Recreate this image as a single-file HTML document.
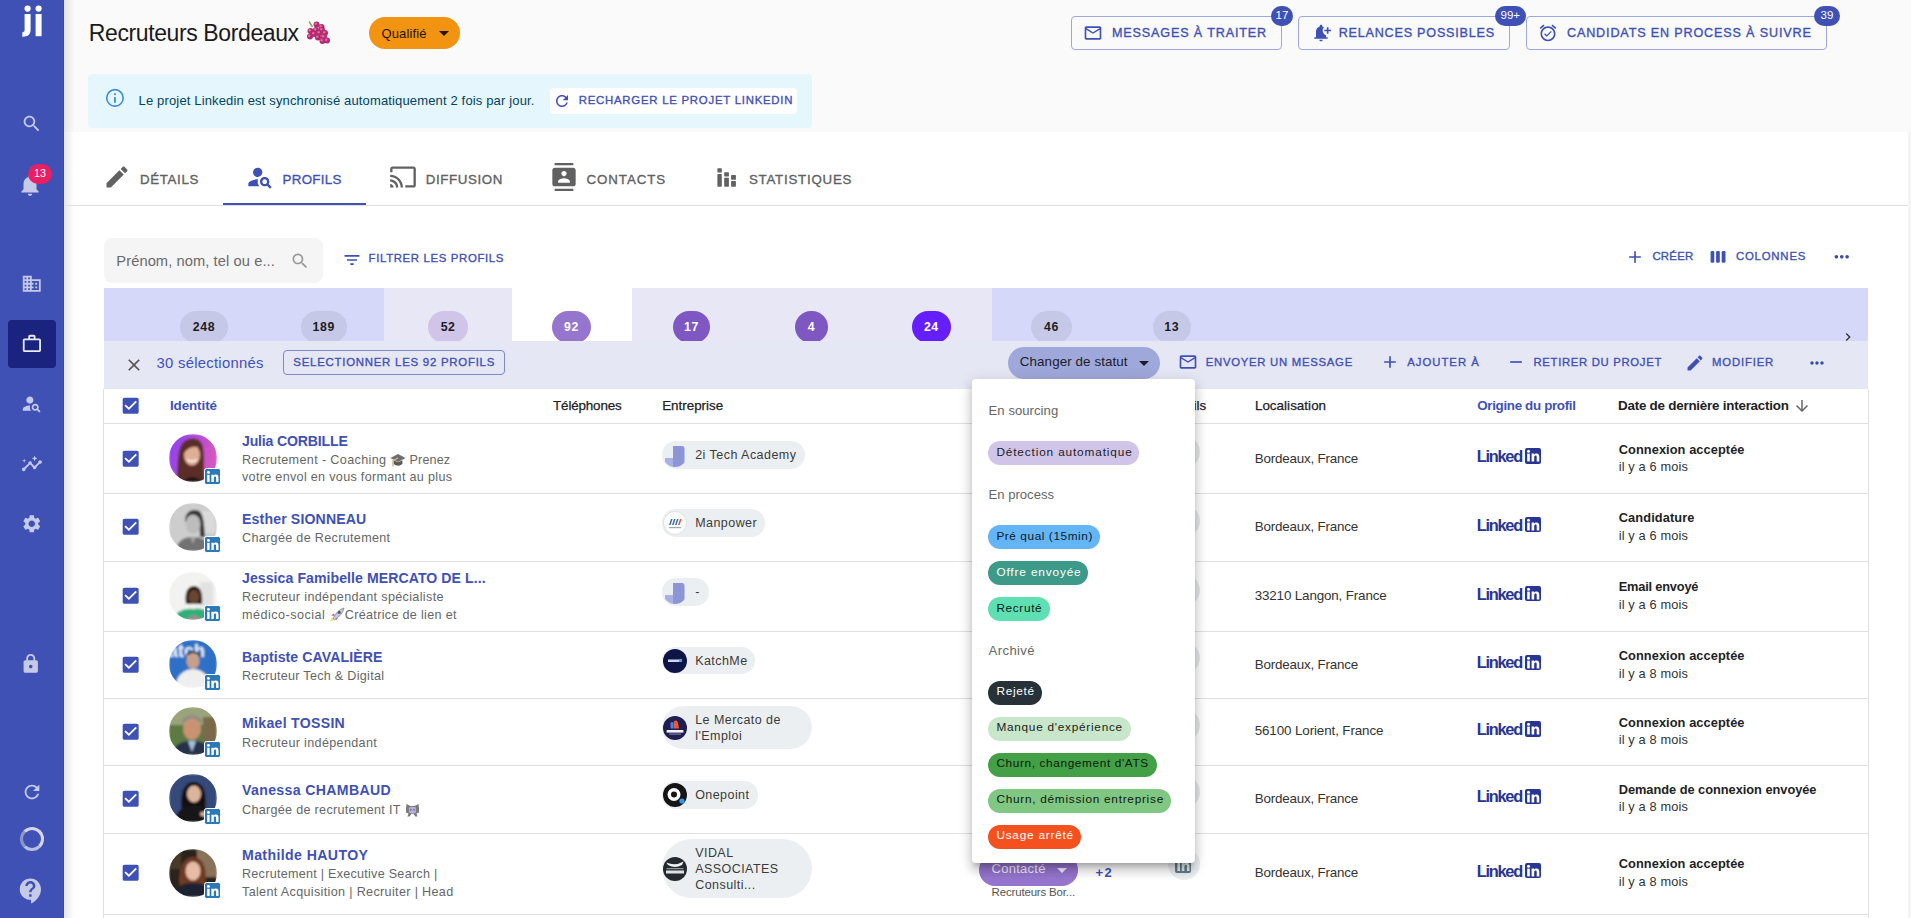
<!DOCTYPE html>
<html><head><meta charset="utf-8"><title>Recruteurs Bordeaux</title>
<style>
html,body{margin:0;padding:0;width:1911px;height:918px;overflow:hidden;position:relative;font-family:"Liberation Sans",sans-serif;}
.r{position:absolute;}
.t{position:absolute;white-space:nowrap;line-height:1;}
</style></head><body>
<div class="r" style="left:0px;top:0px;width:1911px;height:918px;background:#f5f5f5;"></div>
<div class="r" style="left:64px;top:0px;width:1847px;height:131.5px;background:#fafafa;"></div>
<div class="r" style="left:64px;top:131.5px;width:1844px;height:786.5px;background:#ffffff;"></div>
<div class="r" style="left:0px;top:0px;width:64px;height:918px;background:#3f51b5;"></div>
<div class="r" style="left:63px;top:0px;width:1px;height:918px;background:#3a48a0;"></div>
<div class="r" style="left:64px;top:0;width:10px;height:918px;background:linear-gradient(90deg,rgba(0,0,0,0.10),rgba(0,0,0,0))"></div>
<svg class="r" style="left:18px;top:4px" width="28" height="34" viewBox="0 0 28 34"><circle cx="9.6" cy="4.6" r="3.1" fill="#fff"/><circle cx="20.6" cy="4.6" r="3.1" fill="#fff"/><path fill="#fff" d="M6.6 10h6v15.5c0 5-2.6 7.2-7.8 7.2h-0.6l.3-4.8h.4c1.3 0 1.7-.6 1.7-2.2z"/><rect x="17.6" y="10" width="6" height="22.2" fill="#fff"/></svg>
<svg class="r" style="left:20.7px;top:113.3px;" width="21.4" height="21.4" viewBox="0 0 24 24"><path fill="#c5cae9" d="M15.5 14h-.79l-.28-.27C15.41 12.59 16 11.11 16 9.5 16 5.91 13.09 3 9.5 3S3 5.91 3 9.5 5.91 16 9.5 16c1.61 0 3.09-.59 4.23-1.57l.27.28v.79l5 4.99L20.49 19l-4.99-5zm-6 0C7.01 14 5 11.99 5 9.5S7.01 5 9.5 5 14 7.01 14 9.5 11.99 14 9.5 14z"/></svg>
<svg class="r" style="left:17px;top:171.5px;" width="26" height="26" viewBox="0 0 24 24"><path fill="#c5cae9" d="M12 22c1.1 0 2-.9 2-2h-4c0 1.1.89 2 2 2zm6-6v-5c0-3.07-1.64-5.64-4.5-6.32V4c0-.83-.67-1.5-1.5-1.5s-1.5.67-1.5 1.5v.68C7.63 5.36 6 7.92 6 11v5l-2 2v1h16v-1l-2-2z"/></svg>
<div class="r" style="left:28px;top:164px;width:24px;height:20px;border-radius:10px;background:#e91e63"></div>
<span id="b13" class="t" style="left:0.00px;top:168.06px;font-size:10.8px;color:#fff;font-weight:400;letter-spacing:0.000px;left:28px;width:24px;text-align:center;">13</span>
<svg class="r" style="left:20.9px;top:273.1px;" width="21.5" height="21.5" viewBox="0 0 24 24"><path fill="#c5cae9" d="M12 7V3H2v18h20V7H12zM6 19H4v-2h2v2zm0-4H4v-2h2v2zm0-4H4V9h2v2zm0-4H4V5h2v2zm4 12H8v-2h2v2zm0-4H8v-2h2v2zm0-4H8V9h2v2zm0-4H8V5h2v2zm10 12h-8v-2h2v-2h-2v-2h2v-2h-2V9h8v10zm-2-8h-2v2h2v-2zm0 4h-2v2h2v-2z"/></svg>
<div class="r" style="left:8px;top:320px;width:48px;height:47.5px;background:#1a237e;border-radius:4px;"></div>
<svg class="r" style="left:20.9px;top:333px;" width="21.8" height="21.8" viewBox="0 0 24 24"><path fill="#e8eaf6" d="M14 6V4h-4v2h4zM4 8v11h16V8H4zm16-2c1.11 0 2 .89 2 2v11c0 1.11-.89 2-2 2H4c-1.11 0-2-.89-2-2l.01-11c0-1.11.88-2 1.99-2h4V4c0-1.11.89-2 2-2h4c1.11 0 2 .89 2 2v2h4z"/></svg>
<svg class="r" style="left:20.9px;top:392.6px;" width="21.3" height="21.3" viewBox="0 0 24 24"><path fill="#c5cae9" d="M10 12c2.21 0 4-1.79 4-4s-1.79-4-4-4-4 1.79-4 4 1.79 4 4 4zm.35 2.01C7.62 13.91 2 15.27 2 18v2h9.54c-2.47-2.76-1.23-5.89-1.19-5.99zm9.08 4.01c.36-.59.57-1.28.57-2.02 0-2.21-1.79-4-4-4s-4 1.79-4 4 1.79 4 4 4c.74 0 1.43-.22 2.02-.57L20.59 22 22 20.59l-2.57-2.58zM16 18c-1.1 0-2-.9-2-2s.9-2 2-2 2 .9 2 2-.9 2-2 2z"/></svg>
<svg class="r" style="left:20.9px;top:453.1px;" width="21.8" height="21.8" viewBox="0 0 24 24"><path fill="#c5cae9" d="M21 8c-1.45 0-2.26 1.44-1.93 2.51l-3.55 3.56c-.3-.09-.74-.09-1.04 0l-2.55-2.55C12.27 10.45 11.46 9 10 9c-1.45 0-2.27 1.44-1.93 2.52l-4.56 4.55C2.44 15.74 1 16.55 1 18c0 1.1.9 2 2 2 1.45 0 2.26-1.44 1.93-2.51l4.55-4.56c.3.09.74.09 1.04 0l2.55 2.55C12.73 16.55 13.54 18 15 18c1.45 0 2.27-1.44 1.93-2.52l3.56-3.55c1.07.33 2.51-.48 2.51-1.93 0-1.1-.9-2-2-2zM15 9l.94-2.07L18 6l-2.06-.93L15 3l-.92 2.07L12 6l2.08.93zM3.5 11 4 9l2-.5L4 8l-.5-2L3 8l-2 .5L3 9z"/></svg>
<svg class="r" style="left:21.1px;top:513.2px;" width="21.5" height="21.5" viewBox="0 0 24 24"><path fill="#c5cae9" d="M19.14 12.94c.04-.3.06-.61.06-.94 0-.32-.02-.64-.07-.94l2.03-1.58c.18-.14.23-.41.12-.61l-1.92-3.32c-.12-.22-.37-.29-.59-.22l-2.39.96c-.5-.38-1.03-.7-1.62-.94l-.36-2.54c-.04-.24-.24-.41-.48-.41h-3.84c-.24 0-.43.17-.47.41l-.36 2.54c-.59.24-1.13.57-1.62.94l-2.39-.96c-.22-.08-.47 0-.59.22L2.74 8.87c-.12.21-.08.47.12.61l2.03 1.58c-.05.3-.09.63-.09.94s.02.64.07.94l-2.03 1.58c-.18.14-.23.41-.12.61l1.92 3.32c.12.22.37.29.59.22l2.39-.96c.5.38 1.03.7 1.62.94l.36 2.54c.05.24.24.41.48.41h3.84c.24 0 .44-.17.47-.41l.36-2.54c.59-.24 1.13-.56 1.62-.94l2.39.96c.22.08.47 0 .59-.22l1.92-3.32c.12-.22.07-.47-.12-.61l-2.01-1.58zM12 15.6c-1.98 0-3.6-1.62-3.6-3.6s1.62-3.6 3.6-3.6 3.6 1.62 3.6 3.6-1.62 3.6-3.6 3.6z"/></svg>
<svg class="r" style="left:20px;top:652.7px;" width="21.5" height="21.5" viewBox="0 0 24 24"><path fill="#c5cae9" d="M18 8h-1V6c0-2.76-2.24-5-5-5S7 3.24 7 6v2H6c-1.1 0-2 .9-2 2v10c0 1.1.9 2 2 2h12c1.1 0 2-.9 2-2V10c0-1.1-.9-2-2-2zm-6 9c-1.1 0-2-.9-2-2s.9-2 2-2 2 .9 2 2-.9 2-2 2zM9 8V6c0-1.66 1.34-3 3-3s3 1.34 3 3v2H9z"/></svg>
<svg class="r" style="left:20.8px;top:780.7px;" width="22" height="22" viewBox="0 0 24 24"><path fill="#c5cae9" d="M17.65 6.35C16.2 4.9 14.21 4 12 4c-4.42 0-7.99 3.58-7.99 8s3.57 8 7.99 8c3.73 0 6.84-2.55 7.73-6h-2.08c-.82 2.33-3.04 4-5.65 4-3.31 0-6-2.69-6-6s2.69-6 6-6c1.66 0 3.14.69 4.22 1.78L13 11h7V4l-2.35 2.35z"/></svg>
<div class="r" style="left:20px;top:826.5px;width:24px;height:24px;border-radius:50%;box-sizing:border-box;border:3.2px solid #d4d8ef;border-left-color:#8d96c8;border-bottom-color:#b9bfe0"></div>
<svg class="r" style="left:16px;top:876px;" width="30" height="30" viewBox="0 0 24 24"><path fill="#c5cae9" d="M11.5 2C6.81 2 3 5.81 3 10.5S6.81 19 11.5 19h.5v3c4.86-2.34 8-7 8-11.5C20 5.81 16.19 2 11.5 2zm1 14.5h-2v-2h2v2zm0-3.5h-2c0-3.25 3-3 3-5 0-1.1-.9-2-2-2s-2 .9-2 2h-2c0-2.21 1.79-4 4-4s4 1.79 4 4c0 2.5-3 2.75-3 5z"/></svg>
<span id="title" class="t" style="left:88.80px;top:22.13px;font-size:23px;color:#1a1a1a;font-weight:400;letter-spacing:-0.391px;">Recruteurs Bordeaux</span>
<svg class="r" style="left:306px;top:20px" width="26" height="26" viewBox="0 0 26 26"><path d="M3 1.5 L6.5 7" stroke="#79a85a" stroke-width="1.4" fill="none"/><circle cx="10.5" cy="4.5" r="3" fill="#b32a6e"/><circle cx="9.7" cy="3.7" r="1.2" fill="#e46aa6"/><circle cx="15.5" cy="7.0" r="3" fill="#b32a6e"/><circle cx="14.7" cy="6.2" r="1.2" fill="#e46aa6"/><circle cx="4.5" cy="11.0" r="3" fill="#b32a6e"/><circle cx="3.7" cy="10.2" r="1.2" fill="#e46aa6"/><circle cx="10.0" cy="10.0" r="3" fill="#b32a6e"/><circle cx="9.2" cy="9.2" r="1.2" fill="#e46aa6"/><circle cx="16.0" cy="10.0" r="3" fill="#b32a6e"/><circle cx="15.2" cy="9.2" r="1.2" fill="#e46aa6"/><circle cx="8.0" cy="14.0" r="3" fill="#b32a6e"/><circle cx="7.2" cy="13.2" r="1.2" fill="#e46aa6"/><circle cx="13.5" cy="13.0" r="3" fill="#b32a6e"/><circle cx="12.7" cy="12.2" r="1.2" fill="#e46aa6"/><circle cx="19.0" cy="13.0" r="3" fill="#b32a6e"/><circle cx="18.2" cy="12.2" r="1.2" fill="#e46aa6"/><circle cx="4.0" cy="16.5" r="3" fill="#b32a6e"/><circle cx="3.2" cy="15.7" r="1.2" fill="#e46aa6"/><circle cx="12.0" cy="17.5" r="3" fill="#b32a6e"/><circle cx="11.2" cy="16.7" r="1.2" fill="#e46aa6"/><circle cx="18.0" cy="17.0" r="3" fill="#b32a6e"/><circle cx="17.2" cy="16.2" r="1.2" fill="#e46aa6"/><circle cx="16.5" cy="21.0" r="3" fill="#b32a6e"/><circle cx="15.7" cy="20.2" r="1.2" fill="#e46aa6"/><circle cx="21.0" cy="20.5" r="3" fill="#b32a6e"/><circle cx="20.2" cy="19.7" r="1.2" fill="#e46aa6"/></svg>
<div class="r" style="left:369px;top:17px;width:91px;height:32px;background:#f39312;border-radius:16px;"></div>
<span id="qual" class="t" style="left:381.50px;top:26.70px;font-size:13px;color:#231300;font-weight:400;letter-spacing:0.130px;">Qualifié</span>
<svg class="r" style="left:432px;top:21px;" width="24" height="24" viewBox="0 0 24 24"><path fill="#231300" d="M7 10l5 5 5-5z"/></svg>
<div class="r" style="left:1071px;top:16px;width:211px;height:34px;background:transparent;border:1px solid #9fa8da;border-radius:4px;box-sizing:border-box;"></div>
<svg class="r" style="left:1083px;top:23px;" width="20" height="20" viewBox="0 0 24 24"><path fill="#3f51b5" d="M20 4H4c-1.1 0-1.99.9-1.99 2L2 18c0 1.1.9 2 2 2h16c1.1 0 2-.9 2-2V6c0-1.1-.9-2-2-2zm0 14H4V8l8 5 8-5v10zm-8-7L4 6h16l-8 5z"/></svg>
<span id="tb1" class="t" style="left:1112.00px;top:26.53px;font-size:12.6px;color:#3f51b5;font-weight:400;letter-spacing:0.851px;-webkit-text-stroke:0.35px #3f51b5;">MESSAGES À TRAITER</span>
<div class="r" style="left:1271px;top:6px;width:22px;height:20px;background:#3f51b5;border-radius:10px;"></div>
<span id="tb1b" class="t" style="left:0.00px;top:10.47px;font-size:11.5px;color:#fff;font-weight:400;letter-spacing:0.000px;width:22px;left:1271px;text-align:center;">17</span>
<div class="r" style="left:1298px;top:16px;width:212px;height:34px;background:transparent;border:1px solid #9fa8da;border-radius:4px;box-sizing:border-box;"></div>
<svg class="r" style="left:1311px;top:23px;" width="20" height="20" viewBox="0 0 24 24"><path fill="#3f51b5" d="M10 20h4c0 1.1-.9 2-2 2s-2-.9-2-2zm4-11c0 2.61 1.67 4.83 4 5.65V17h2v2H4v-2h2v-7c0-2.79 1.91-5.14 4.5-5.8v-.7c0-.83.67-1.5 1.5-1.5s1.5.67 1.5 1.5v.7c.71.18 1.36.49 1.95.9C14.54 6.14 14 7.51 14 9zm10-1h-3V5h-2v3h-3v2h3v3h2v-3h3V8z"/></svg>
<span id="tb2" class="t" style="left:1338.70px;top:26.53px;font-size:12.6px;color:#3f51b5;font-weight:400;letter-spacing:0.783px;-webkit-text-stroke:0.35px #3f51b5;">RELANCES POSSIBLES</span>
<div class="r" style="left:1494.5px;top:6px;width:31.5px;height:20px;background:#3f51b5;border-radius:10px;"></div>
<span id="tb2b" class="t" style="left:0.00px;top:10.47px;font-size:11.5px;color:#fff;font-weight:400;letter-spacing:0.000px;width:31.5px;left:1494.5px;text-align:center;">99+</span>
<div class="r" style="left:1526px;top:16px;width:301px;height:34px;background:transparent;border:1px solid #9fa8da;border-radius:4px;box-sizing:border-box;"></div>
<svg class="r" style="left:1538px;top:23px;" width="20" height="20" viewBox="0 0 24 24"><path fill="#3f51b5" d="M22 5.72l-4.6-3.86-1.29 1.53 4.6 3.86L22 5.72zM7.88 3.39L6.6 1.86 2 5.71l1.29 1.53 4.59-3.85zM12 4c-4.97 0-9 4.03-9 9s4.02 9 9 9c4.97 0 9-4.03 9-9s-4.03-9-9-9zm0 16c-3.87 0-7-3.13-7-7s3.13-7 7-7 7 3.13 7 7-3.13 7-7 7zm-1.46-5.47L8.41 12.4l-1.06 1.06 3.18 3.18 6-6-1.06-1.06-4.93 4.95z"/></svg>
<span id="tb3" class="t" style="left:1567.00px;top:26.53px;font-size:12.6px;color:#3f51b5;font-weight:400;letter-spacing:0.843px;-webkit-text-stroke:0.35px #3f51b5;">CANDIDATS EN PROCESS À SUIVRE</span>
<div class="r" style="left:1814px;top:6px;width:26px;height:20px;background:#3f51b5;border-radius:10px;"></div>
<span id="tb3b" class="t" style="left:0.00px;top:10.47px;font-size:11.5px;color:#fff;font-weight:400;letter-spacing:0.000px;width:26px;left:1814px;text-align:center;">39</span>
<div class="r" style="left:88px;top:74px;width:724px;height:54px;background:#e5f6fd;border-radius:4px;"></div>
<svg class="r" style="left:100px;top:83px" width="30" height="30" viewBox="100 83 30 30"><circle cx="114.95" cy="97.9" r="8.25" fill="none" stroke="#3b8dd0" stroke-width="1.6"/><rect x="114.05" y="93.3" width="1.8" height="1.8" fill="#3b8dd0"/><rect x="114.05" y="97" width="1.8" height="5.8" fill="#3b8dd0"/></svg>
<span id="info" class="t" style="left:138.60px;top:94.30px;font-size:13px;color:#014361;font-weight:400;letter-spacing:0.150px;">Le projet Linkedin est synchronisé automatiquement 2 fois par jour.</span>
<div class="r" style="left:550px;top:88px;width:247px;height:26px;background:#ffffff;border-radius:4px;"></div>
<svg class="r" style="left:553px;top:92px;" width="18" height="18" viewBox="0 0 24 24"><path fill="#3f51b5" d="M17.65 6.35C16.2 4.9 14.21 4 12 4c-4.42 0-7.99 3.58-7.99 8s3.57 8 7.99 8c3.73 0 6.84-2.55 7.73-6h-2.08c-.82 2.33-3.04 4-5.65 4-3.31 0-6-2.69-6-6s2.69-6 6-6c1.66 0 3.14.69 4.22 1.78L13 11h7V4l-2.35 2.35z"/></svg>
<span id="reload" class="t" style="left:578.70px;top:95.05px;font-size:11.4px;color:#3f51b5;font-weight:400;letter-spacing:0.753px;-webkit-text-stroke:0.35px #3f51b5;">RECHARGER LE PROJET LINKEDIN</span>
<div class="r" style="left:64px;top:205px;width:1844px;height:1px;background:#e0e0e0;"></div>
<div class="r" style="left:223px;top:203px;width:143px;height:2px;background:#3f51b5;"></div>
<svg class="r" style="left:103px;top:163px;" width="28" height="28" viewBox="0 0 24 24"><path fill="#616161" d="M3 17.25V21h3.75L17.81 9.94l-3.75-3.75L3 17.25zM20.71 7.04c.39-.39.39-1.02 0-1.41l-2.34-2.34c-.39-.39-1.02-.39-1.41 0l-1.83 1.83 3.75 3.75 1.83-1.83z"/></svg>
<span id="tab1" class="t" style="left:140.00px;top:173.04px;font-size:13.3px;color:#616161;font-weight:400;letter-spacing:0.660px;-webkit-text-stroke:0.35px #616161;">DÉTAILS</span>
<svg class="r" style="left:246px;top:163px;" width="28" height="28" viewBox="0 0 24 24"><path fill="#3f51b5" d="M10 12c2.21 0 4-1.79 4-4s-1.79-4-4-4-4 1.79-4 4 1.79 4 4 4zm.35 2.01C7.62 13.91 2 15.27 2 18v2h9.54c-2.47-2.76-1.23-5.89-1.19-5.99zm9.08 4.01c.36-.59.57-1.28.57-2.02 0-2.21-1.79-4-4-4s-4 1.79-4 4 1.79 4 4 4c.74 0 1.43-.22 2.02-.57L20.59 22 22 20.59l-2.57-2.58zM16 18c-1.1 0-2-.9-2-2s.9-2 2-2 2 .9 2 2-.9 2-2 2z"/></svg>
<span id="tab2" class="t" style="left:282.50px;top:173.04px;font-size:13.3px;color:#3f51b5;font-weight:400;letter-spacing:0.348px;-webkit-text-stroke:0.35px #3f51b5;">PROFILS</span>
<svg class="r" style="left:389px;top:163px;" width="28" height="28" viewBox="0 0 24 24"><path fill="#616161" d="M21 3H3c-1.1 0-2 .9-2 2v3h2V5h18v14h-7v2h7c1.1 0 2-.9 2-2V5c0-1.1-.9-2-2-2zM1 18v3h3c0-1.66-1.34-3-3-3zm0-4v2c2.76 0 5 2.24 5 5h2c0-3.87-3.13-7-7-7zm0-4v2c4.97 0 9 4.03 9 9h2c0-6.08-4.93-11-11-11z"/></svg>
<span id="tab3" class="t" style="left:425.80px;top:173.04px;font-size:13.3px;color:#616161;font-weight:400;letter-spacing:0.618px;-webkit-text-stroke:0.35px #616161;">DIFFUSION</span>
<svg class="r" style="left:550px;top:163px;" width="28" height="28" viewBox="0 0 24 24"><path fill="#616161" d="M20 0H4v2h16V0zM4 24h16v-2H4v2zM20 4H4c-1.1 0-2 .9-2 2v12c0 1.1.9 2 2 2h16c1.1 0 2-.9 2-2V6c0-1.1-.9-2-2-2zm-8 2.75c1.24 0 2.25 1.01 2.25 2.25s-1.01 2.25-2.25 2.25S9.75 10.24 9.75 9 10.76 6.75 12 6.75zM17 17H7v-1.5c0-1.67 3.33-2.5 5-2.5s5 .83 5 2.5V17z"/></svg>
<span id="tab4" class="t" style="left:586.60px;top:173.04px;font-size:13.3px;color:#616161;font-weight:400;letter-spacing:0.906px;-webkit-text-stroke:0.35px #616161;">CONTACTS</span>
<svg class="r" style="left:700px;top:160px" width="40" height="30" viewBox="700 160 40 30"><g fill="#616161"><rect x="717.4" y="168.2" width="4.4" height="4.4" rx="0.6"/><rect x="717.4" y="174.1" width="4.4" height="12.6" rx="0.6"/><rect x="724.2" y="172.2" width="4.7" height="4.2" rx="0.6"/><rect x="724.2" y="177.7" width="4.7" height="9" rx="0.6"/><rect x="731.1" y="175.1" width="4.8" height="4.7" rx="0.6"/><rect x="731.1" y="181" width="4.8" height="5.7" rx="0.6"/></g></svg>
<span id="tab5" class="t" style="left:748.90px;top:173.04px;font-size:13.3px;color:#616161;font-weight:400;letter-spacing:0.766px;-webkit-text-stroke:0.35px #616161;">STATISTIQUES</span>
<div class="r" style="left:104px;top:238px;width:219px;height:45px;background:#f5f5f5;border-radius:8px;"></div>
<span id="ph" class="t" style="left:116.30px;top:253.66px;font-size:14.7px;color:#6b6b6b;font-weight:400;letter-spacing:0.076px;">Prénom, nom, tel ou e...</span>
<svg class="r" style="left:290px;top:250.5px;" width="20" height="20" viewBox="0 0 24 24"><path fill="#9a9a9a" d="M15.5 14h-.79l-.28-.27C15.41 12.59 16 11.11 16 9.5 16 5.91 13.09 3 9.5 3S3 5.91 3 9.5 5.91 16 9.5 16c1.61 0 3.09-.59 4.23-1.57l.27.28v.79l5 4.99L20.49 19l-4.99-5zm-6 0C7.01 14 5 11.99 5 9.5S7.01 5 9.5 5 14 7.01 14 9.5 11.99 14 9.5 14z"/></svg>
<svg class="r" style="left:341.5px;top:250px;" width="20" height="20" viewBox="0 0 24 24"><path fill="#3f51b5" d="M10 18h4v-2h-4v2zM3 6v2h18V6H3zm3 7h12v-2H6v2z"/></svg>
<span id="filt" class="t" style="left:368.60px;top:253.05px;font-size:11.4px;color:#3f51b5;font-weight:400;letter-spacing:0.643px;-webkit-text-stroke:0.35px #3f51b5;">FILTRER LES PROFILS</span>
<svg class="r" style="left:1625px;top:247px;" width="20" height="20" viewBox="0 0 24 24"><path fill="#3f51b5" d="M19 13h-6v6h-2v-6H5v-2h6V5h2v6h6v2z"/></svg>
<span id="creer" class="t" style="left:1652.40px;top:250.65px;font-size:11.4px;color:#3f51b5;font-weight:400;letter-spacing:0.231px;-webkit-text-stroke:0.35px #3f51b5;">CRÉER</span>
<svg class="r" style="left:1700px;top:240px" width="40" height="30" viewBox="1700 240 40 30"><g fill="#3f51b5"><rect x="1710.6" y="251" width="3.7" height="11.8" rx="1.3"/><rect x="1716.1" y="251" width="3.7" height="11.8" rx="1.3"/><rect x="1721.7" y="251" width="3.8" height="11.8" rx="1.3"/></g></svg>
<span id="cols" class="t" style="left:1735.90px;top:250.65px;font-size:11.4px;color:#3f51b5;font-weight:400;letter-spacing:0.795px;-webkit-text-stroke:0.35px #3f51b5;">COLONNES</span>
<svg class="r" style="left:1830.9px;top:245.7px;" width="21.5" height="21.5" viewBox="0 0 24 24"><path fill="#3a4aa8" d="M6 10c-1.1 0-2 .9-2 2s.9 2 2 2 2-.9 2-2-.9-2-2-2zm12 0c-1.1 0-2 .9-2 2s.9 2 2 2 2-.9 2-2-.9-2-2-2zm-6 0c-1.1 0-2 .9-2 2s.9 2 2 2 2-.9 2-2-.9-2-2-2z"/></svg>
<div class="r" style="left:104px;top:288px;width:280px;height:53px;background:#d6d8fa;"></div>
<div class="r" style="left:384px;top:288px;width:128px;height:53px;background:#e7e7f5;"></div>
<div class="r" style="left:512px;top:288px;width:120px;height:53px;background:#ffffff;"></div>
<div class="r" style="left:632px;top:288px;width:360px;height:53px;background:#e7e7f5;"></div>
<div class="r" style="left:992px;top:288px;width:876px;height:53px;background:#d6d8fa;"></div>
<div class="r" style="left:104px;top:288px;width:1764px;height:53px;overflow:hidden">
<div class="r" style="left:76.0px;top:23px;width:48.0px;height:32px;border-radius:16px;background:#c6c8e8;color:#1c1c1c;font-size:12.3px;font-weight:700;text-align:center;line-height:33px;letter-spacing:0.6px">248</div>
<div class="r" style="left:196.8px;top:23px;width:45.9px;height:32px;border-radius:16px;background:#c6c8e8;color:#1c1c1c;font-size:12.3px;font-weight:700;text-align:center;line-height:33px;letter-spacing:0.6px">189</div>
<div class="r" style="left:324.2px;top:23px;width:39.8px;height:32px;border-radius:16px;background:#d1c4e9;color:#1c1c1c;font-size:12.3px;font-weight:700;text-align:center;line-height:33px;letter-spacing:0.6px">52</div>
<div class="r" style="left:447.9px;top:23px;width:39.1px;height:32px;border-radius:16px;background:#9575cd;color:#fff;font-size:12.3px;font-weight:700;text-align:center;line-height:33px;letter-spacing:0.6px">92</div>
<div class="r" style="left:569.0px;top:23px;width:37.0px;height:32px;border-radius:16px;background:#7e57c2;color:#fff;font-size:12.3px;font-weight:700;text-align:center;line-height:33px;letter-spacing:0.6px">17</div>
<div class="r" style="left:690.8px;top:23px;width:33.2px;height:32px;border-radius:16px;background:#7e57c2;color:#fff;font-size:12.3px;font-weight:700;text-align:center;line-height:33px;letter-spacing:0.6px">4</div>
<div class="r" style="left:807.7px;top:23px;width:39.3px;height:32px;border-radius:16px;background:#651fff;color:#fff;font-size:12.3px;font-weight:700;text-align:center;line-height:33px;letter-spacing:0.6px">24</div>
<div class="r" style="left:927.0px;top:23px;width:41.0px;height:32px;border-radius:16px;background:#c6c8e8;color:#1c1c1c;font-size:12.3px;font-weight:700;text-align:center;line-height:33px;letter-spacing:0.6px">46</div>
<div class="r" style="left:1048.7px;top:23px;width:37.9px;height:32px;border-radius:16px;background:#c6c8e8;color:#1c1c1c;font-size:12.3px;font-weight:700;text-align:center;line-height:33px;letter-spacing:0.6px">13</div>
</div>
<svg class="r" style="left:1840px;top:329px;" width="16" height="16" viewBox="0 0 24 24"><path fill="#333" d="M10 6L8.59 7.41 13.17 12l-4.58 4.59L10 18l6-6z"/></svg>
<div class="r" style="left:104px;top:341px;width:1764px;height:47.5px;background:#e6e7f5;"></div>
<svg class="r" style="left:124px;top:355px;" width="20" height="20" viewBox="0 0 24 24"><path fill="#555" d="M19 6.41L17.59 5 12 10.59 6.41 5 5 6.41 10.59 12 5 17.59 6.41 19 12 13.41 17.59 19 19 17.59 13.41 12z"/></svg>
<span id="sel" class="t" style="left:156.60px;top:355.67px;font-size:14.8px;color:#3f51b5;font-weight:400;letter-spacing:0.283px;">30 sélectionnés</span>
<div class="r" style="left:283px;top:350px;width:222px;height:25px;background:transparent;border:1px solid #8088c6;border-radius:4px;box-sizing:border-box;"></div>
<span id="selall" class="t" style="left:293.30px;top:356.95px;font-size:11.4px;color:#3f51b5;font-weight:400;letter-spacing:0.767px;-webkit-text-stroke:0.35px #3f51b5;">SELECTIONNER LES 92 PROFILS</span>
<div class="r" style="left:1008px;top:347px;width:152px;height:32px;background:#9fa8da;border-radius:16px;"></div>
<span id="chg" class="t" style="left:1019.80px;top:355.46px;font-size:13.4px;color:#1c1c2a;font-weight:400;letter-spacing:0.084px;">Changer de statut</span>
<svg class="r" style="left:1132px;top:351px;" width="24" height="24" viewBox="0 0 24 24"><path fill="#1c1c2a" d="M7 10l5 5 5-5z"/></svg>
<svg class="r" style="left:1178px;top:352px;" width="20" height="20" viewBox="0 0 24 24"><path fill="#3f51b5" d="M20 4H4c-1.1 0-1.99.9-1.99 2L2 18c0 1.1.9 2 2 2h16c1.1 0 2-.9 2-2V6c0-1.1-.9-2-2-2zm0 14H4V8l8 5 8-5v10zm-8-7L4 6h16l-8 5z"/></svg>
<span id="env" class="t" style="left:1205.70px;top:356.63px;font-size:11.3px;color:#3f51b5;font-weight:400;letter-spacing:0.752px;-webkit-text-stroke:0.35px #3f51b5;">ENVOYER UN MESSAGE</span>
<svg class="r" style="left:1380px;top:352px;" width="20" height="20" viewBox="0 0 24 24"><path fill="#3f51b5" d="M19 13h-6v6h-2v-6H5v-2h6V5h2v6h6v2z"/></svg>
<span id="ajt" class="t" style="left:1407.20px;top:356.63px;font-size:11.3px;color:#3f51b5;font-weight:400;letter-spacing:1.024px;-webkit-text-stroke:0.35px #3f51b5;">AJOUTER À</span>
<svg class="r" style="left:1506px;top:352px;" width="20" height="20" viewBox="0 0 24 24"><path fill="#3f51b5" d="M19 13H5v-2h14v2z"/></svg>
<span id="ret" class="t" style="left:1533.50px;top:356.63px;font-size:11.3px;color:#3f51b5;font-weight:400;letter-spacing:0.690px;-webkit-text-stroke:0.35px #3f51b5;">RETIRER DU PROJET</span>
<svg class="r" style="left:1685px;top:353px;" width="20" height="20" viewBox="0 0 24 24"><path fill="#3f51b5" d="M3 17.25V21h3.75L17.81 9.94l-3.75-3.75L3 17.25zM20.71 7.04c.39-.39.39-1.02 0-1.41l-2.34-2.34c-.39-.39-1.02-.39-1.41 0l-1.83 1.83 3.75 3.75 1.83-1.83z"/></svg>
<span id="mod" class="t" style="left:1712.00px;top:356.63px;font-size:11.3px;color:#3f51b5;font-weight:400;letter-spacing:0.852px;-webkit-text-stroke:0.35px #3f51b5;">MODIFIER</span>
<svg class="r" style="left:1807px;top:352.5px;" width="20" height="20" viewBox="0 0 24 24"><path fill="#3a4aa8" d="M6 10c-1.1 0-2 .9-2 2s.9 2 2 2 2-.9 2-2-.9-2-2-2zm12 0c-1.1 0-2 .9-2 2s.9 2 2 2 2-.9 2-2-.9-2-2-2zm-6 0c-1.1 0-2 .9-2 2s.9 2 2 2 2-.9 2-2-.9-2-2-2z"/></svg>
<div class="r" style="left:103px;top:388.5px;width:1px;height:529.5px;background:#e0e0e0;"></div>
<div class="r" style="left:1868px;top:388.5px;width:1px;height:529.5px;background:#e0e0e0;"></div>
<div class="r" style="left:104px;top:423px;width:1764px;height:1px;background:#e0e0e0;"></div>
<div class="r" style="left:104px;top:493px;width:1764px;height:1px;background:#e0e0e0;"></div>
<div class="r" style="left:104px;top:560.5px;width:1764px;height:1.0px;background:#e0e0e0;"></div>
<div class="r" style="left:104px;top:631px;width:1764px;height:1px;background:#e0e0e0;"></div>
<div class="r" style="left:104px;top:698px;width:1764px;height:1px;background:#e0e0e0;"></div>
<div class="r" style="left:104px;top:765px;width:1764px;height:1px;background:#e0e0e0;"></div>
<div class="r" style="left:104px;top:832.5px;width:1764px;height:1.0px;background:#e0e0e0;"></div>
<div class="r" style="left:104px;top:913.5px;width:1764px;height:1.0px;background:#e0e0e0;"></div>
<svg class="r" style="left:120.3px;top:394.6px;" width="21.33" height="21.33" viewBox="0 0 24 24"><path fill="#3f51b5" d="M19 3H5c-1.11 0-2 .9-2 2v14c0 1.1.89 2 2 2h14c1.11 0 2-.9 2-2V5c0-1.1-.89-2-2-2zm-9 14l-5-5 1.41-1.41L10 14.17l7.59-7.59L19 8l-9 9z"/></svg>
<span id="h_id" class="t" style="left:169.90px;top:399.16px;font-size:13.4px;color:#3f51b5;font-weight:700;letter-spacing:-0.075px;">Identité</span>
<span id="h_tel" class="t" style="left:553.10px;top:399.16px;font-size:13.4px;color:#222;font-weight:400;letter-spacing:-0.154px;-webkit-text-stroke:0.25px #222;">Téléphones</span>
<span id="h_ent" class="t" style="left:662.20px;top:399.16px;font-size:13.4px;color:#222;font-weight:400;letter-spacing:-0.003px;-webkit-text-stroke:0.25px #222;">Entreprise</span>
<span id="h_em" class="t" style="left:1166.00px;top:399.16px;font-size:13.4px;color:#222;font-weight:400;letter-spacing:0.000px;-webkit-text-stroke:0.25px #222;">Emails</span>
<span id="h_loc" class="t" style="left:1254.90px;top:399.16px;font-size:13.4px;color:#222;font-weight:400;letter-spacing:0.042px;-webkit-text-stroke:0.25px #222;">Localisation</span>
<span id="h_or" class="t" style="left:1477.30px;top:399.16px;font-size:13.4px;color:#3f51b5;font-weight:700;letter-spacing:-0.347px;">Origine du profil</span>
<span id="h_dt" class="t" style="left:1618.00px;top:399.16px;font-size:13.4px;color:#222;font-weight:700;letter-spacing:-0.230px;">Date de dernière interaction</span>
<svg class="r" style="left:1793px;top:397px;" width="18" height="18" viewBox="0 0 24 24"><path fill="#666" d="M20 12l-1.41-1.41L13 16.17V4h-2v12.17l-5.58-5.59L4 12l8 8 8-8z"/></svg>
<svg class="r" style="left:120.3px;top:447.83px;" width="21.33" height="21.33" viewBox="0 0 24 24"><path fill="#3f51b5" d="M19 3H5c-1.11 0-2 .9-2 2v14c0 1.1.89 2 2 2h14c1.11 0 2-.9 2-2V5c0-1.1-.89-2-2-2zm-9 14l-5-5 1.41-1.41L10 14.17l7.59-7.59L19 8l-9 9z"/></svg>
<svg class="r" style="left:169px;top:434.0px" width="48" height="48" viewBox="0 0 48 48"><defs><clipPath id="c1"><circle cx="24" cy="24" r="24"/></clipPath><filter id="bl1" x="-10%" y="-10%" width="120%" height="120%"><feGaussianBlur stdDeviation="0.9"/></filter></defs><g clip-path="url(#c1)"><g filter="url(#bl1)"><defs><linearGradient id="grad1" x1="0" y1="0" x2="1" y2="0.3"><stop offset="0" stop-color="#8a3ff0"/><stop offset="1" stop-color="#d656c0"/></linearGradient></defs><rect width="48" height="48" fill="url(#grad1)"/><path d="M8 44 C9 30 8 12 16 7 C22 3 30 4 33 10 C36 18 34 30 36 48 L10 48z" fill="#5a2e26"/><ellipse cx="23" cy="21" rx="8" ry="10.5" fill="#dfae94"/><path d="M15 16 Q18 8 28 9 L31 14 Q22 10 15 19z" fill="#5a2e26"/><path d="M14 48 Q23 38 33 48z" fill="#241414"/><path d="M18 25.5 Q23 29 28 25.5" stroke="#fff" stroke-width="1.3" fill="none"/></g></g></svg>
<div class="r" style="left:204px;top:467.5px;width:17px;height:17px;border-radius:2.5px;background:#2d79b8;border:1px solid #fff;box-sizing:border-box"></div>
<svg class="r" style="left:204px;top:467.5px" width="17" height="17" viewBox="0 0 17 17"><rect x="3.2" y="6.8" width="2.4" height="7.2" fill="#fff"/><circle cx="4.4" cy="4.4" r="1.45" fill="#fff"/><path d="M7.4 6.8h2.3v1c.4-.7 1.2-1.2 2.3-1.2 1.9 0 2.5 1.2 2.5 3v4.4h-2.4v-3.9c0-.9-.2-1.5-1-1.5s-1.3.6-1.3 1.5v3.9H7.4z" fill="#fff"/></svg>
<span id="n0" class="t" style="left:242.00px;top:434.16px;font-size:14.1px;color:#3f51b5;font-weight:700;letter-spacing:-0.175px;">Julia CORBILLE</span>
<span id="d0_0" class="t" style="left:242.00px;top:453.73px;font-size:12.6px;color:#666666;font-weight:400;letter-spacing:0.361px;">Recrutement - Coaching</span>
<span id="d0_1" class="t" style="left:409.60px;top:453.73px;font-size:12.6px;color:#666666;font-weight:400;letter-spacing:0.116px;">Prenez</span>
<span id="d0_2" class="t" style="left:242.00px;top:471.23px;font-size:12.6px;color:#666666;font-weight:400;letter-spacing:0.308px;">votre envol en vous formant au plus</span>
<div class="r" style="left:662px;top:441px;width:143px;height:28px;background:#eceff1;border-radius:14.0px;"></div>
<svg class="r" style="left:662.5px;top:443.0px" width="24" height="24" viewBox="0 0 24 24"><defs><clipPath id="cl455"><circle cx="12" cy="12" r="12"/></clipPath></defs><circle cx="12" cy="12" r="12" fill="#eceff1"/><g clip-path="url(#cl455)"><rect x="10" y="3" width="11.5" height="21" fill="#8c95d6"/><rect x="2" y="15" width="8" height="9" fill="#a9b0e3"/></g></svg>
<span id="c0_0" class="t" style="left:695.20px;top:449.02px;font-size:12.5px;color:#3a3a3a;font-weight:400;letter-spacing:0.466px;">2i Tech Academy</span>
<span id="l0" class="t" style="left:1254.70px;top:452.06px;font-size:13.4px;color:#333;font-weight:400;letter-spacing:-0.203px;">Bordeaux, France</span>
<span id="li0" class="t" style="left:1476.80px;top:448.12px;font-size:16.4px;color:#283593;font-weight:700;letter-spacing:-1.287px;">Linked</span>
<div class="r" style="left:1525px;top:448.4px;width:16px;height:15.400000000000034px;background:#283593;border-radius:2px;"></div>
<svg class="r" style="left:1525px;top:448.4px" width="16" height="15.4" viewBox="0 0 16 15.4"><rect x="2.2" y="5.6" width="2.6" height="7.8" fill="#fff"/><circle cx="3.5" cy="3.2" r="1.5" fill="#fff"/><path d="M6.6 5.6h2.5v1.1c.45-.75 1.3-1.3 2.5-1.3 2 0 2.7 1.3 2.7 3.2v4.8h-2.6V9.2c0-1-.25-1.6-1.1-1.6s-1.4.65-1.4 1.6v4.2H6.6z" fill="#fff"/></svg>
<span id="dt0" class="t" style="left:1618.70px;top:443.56px;font-size:12.8px;color:#222;font-weight:700;letter-spacing:0.079px;">Connexion acceptée</span>
<span id="dd0" class="t" style="left:1618.70px;top:461.26px;font-size:12.8px;color:#333;font-weight:400;letter-spacing:0.128px;">il y a 6 mois</span>
<svg class="r" style="left:120.3px;top:516.33px;" width="21.33" height="21.33" viewBox="0 0 24 24"><path fill="#3f51b5" d="M19 3H5c-1.11 0-2 .9-2 2v14c0 1.1.89 2 2 2h14c1.11 0 2-.9 2-2V5c0-1.1-.89-2-2-2zm-9 14l-5-5 1.41-1.41L10 14.17l7.59-7.59L19 8l-9 9z"/></svg>
<svg class="r" style="left:169px;top:502.5px" width="48" height="48" viewBox="0 0 48 48"><defs><clipPath id="c2"><circle cx="24" cy="24" r="24"/></clipPath><filter id="bl2" x="-10%" y="-10%" width="120%" height="120%"><feGaussianBlur stdDeviation="0.9"/></filter></defs><g clip-path="url(#c2)"><g filter="url(#bl2)"><rect width="48" height="48" fill="#cdcdcd"/><rect x="32" y="8" width="14" height="22" fill="#dadada"/><path d="M16 18 C16 8 24 5 30 8 C35 11 35 22 36 34 L31 34 C31 24 30 16 27 13 C23 12 19 15 18 20z" fill="#343434"/><ellipse cx="24" cy="21" rx="7.5" ry="9.5" fill="#bcbcbc"/><path d="M6 48 Q10 33 24 34 Q38 33 42 48z" fill="#727272"/><path d="M21 34 L24 41 L27 34z" fill="#a0a0a0"/></g></g></svg>
<div class="r" style="left:204px;top:536.0px;width:17px;height:17px;border-radius:2.5px;background:#2d79b8;border:1px solid #fff;box-sizing:border-box"></div>
<svg class="r" style="left:204px;top:536.0px" width="17" height="17" viewBox="0 0 17 17"><rect x="3.2" y="6.8" width="2.4" height="7.2" fill="#fff"/><circle cx="4.4" cy="4.4" r="1.45" fill="#fff"/><path d="M7.4 6.8h2.3v1c.4-.7 1.2-1.2 2.3-1.2 1.9 0 2.5 1.2 2.5 3v4.4h-2.4v-3.9c0-.9-.2-1.5-1-1.5s-1.3.6-1.3 1.5v3.9H7.4z" fill="#fff"/></svg>
<span id="n1" class="t" style="left:242.00px;top:512.26px;font-size:14.1px;color:#3f51b5;font-weight:700;letter-spacing:0.152px;">Esther SIONNEAU</span>
<span id="d1_0" class="t" style="left:242.00px;top:531.83px;font-size:12.6px;color:#666666;font-weight:400;letter-spacing:0.318px;">Chargée de Recrutement</span>
<div class="r" style="left:662px;top:509px;width:102.60000000000002px;height:27.700000000000045px;background:#eceff1;border-radius:13.850000000000023px;"></div>
<svg class="r" style="left:662.5px;top:510.85px" width="24" height="24" viewBox="0 0 24 24"><defs></defs><circle cx="12" cy="12" r="11.5" fill="#fff" stroke="#e0e0e0" stroke-width="1"/><path d="M6 14 l2-6h1.6l-2 6z M9 14 l2-6h1.6l-2 6z M12 14 l2-6h1.6l-2 6z" fill="#3a6fb0"/><path d="M15 14 l2-6h1.6l-2 6z" fill="#e2543a"/><rect x="6" y="16" width="12" height="1.2" fill="#9ab"/></svg>
<span id="c1_0" class="t" style="left:695.20px;top:516.87px;font-size:12.5px;color:#3a3a3a;font-weight:400;letter-spacing:0.446px;">Manpower</span>
<span id="l1" class="t" style="left:1254.70px;top:519.86px;font-size:13.4px;color:#333;font-weight:400;letter-spacing:-0.203px;">Bordeaux, France</span>
<span id="li1" class="t" style="left:1476.80px;top:516.62px;font-size:16.4px;color:#283593;font-weight:700;letter-spacing:-1.287px;">Linked</span>
<div class="r" style="left:1525px;top:516.9px;width:16px;height:15.399999999999977px;background:#283593;border-radius:2px;"></div>
<svg class="r" style="left:1525px;top:516.9px" width="16" height="15.4" viewBox="0 0 16 15.4"><rect x="2.2" y="5.6" width="2.6" height="7.8" fill="#fff"/><circle cx="3.5" cy="3.2" r="1.5" fill="#fff"/><path d="M6.6 5.6h2.5v1.1c.45-.75 1.3-1.3 2.5-1.3 2 0 2.7 1.3 2.7 3.2v4.8h-2.6V9.2c0-1-.25-1.6-1.1-1.6s-1.4.65-1.4 1.6v4.2H6.6z" fill="#fff"/></svg>
<span id="dt1" class="t" style="left:1618.70px;top:512.06px;font-size:12.8px;color:#222;font-weight:700;letter-spacing:0.113px;">Candidature</span>
<span id="dd1" class="t" style="left:1618.70px;top:529.76px;font-size:12.8px;color:#333;font-weight:400;letter-spacing:0.128px;">il y a 6 mois</span>
<svg class="r" style="left:120.3px;top:585.33px;" width="21.33" height="21.33" viewBox="0 0 24 24"><path fill="#3f51b5" d="M19 3H5c-1.11 0-2 .9-2 2v14c0 1.1.89 2 2 2h14c1.11 0 2-.9 2-2V5c0-1.1-.89-2-2-2zm-9 14l-5-5 1.41-1.41L10 14.17l7.59-7.59L19 8l-9 9z"/></svg>
<svg class="r" style="left:169px;top:571.5px" width="48" height="48" viewBox="0 0 48 48"><defs><clipPath id="c3"><circle cx="24" cy="24" r="24"/></clipPath><filter id="bl3" x="-10%" y="-10%" width="120%" height="120%"><feGaussianBlur stdDeviation="0.9"/></filter></defs><g clip-path="url(#c3)"><g filter="url(#bl3)"><rect width="48" height="48" fill="#f2f2f1"/><rect x="31" y="10" width="13" height="24" fill="#e2e2e2"/><path d="M17 32 C15 20 19 14 25 14 C31 14 34 20 33 32z" fill="#2a1c16"/><ellipse cx="25" cy="25" rx="5.5" ry="7" fill="#6a4430"/><path d="M4 48 Q9 35 24 37 Q39 34 45 48z" fill="#2fb07c"/><path d="M17 48 Q24 38 33 48z" fill="#8e8e8e"/></g></g></svg>
<div class="r" style="left:204px;top:605.0px;width:17px;height:17px;border-radius:2.5px;background:#2d79b8;border:1px solid #fff;box-sizing:border-box"></div>
<svg class="r" style="left:204px;top:605.0px" width="17" height="17" viewBox="0 0 17 17"><rect x="3.2" y="6.8" width="2.4" height="7.2" fill="#fff"/><circle cx="4.4" cy="4.4" r="1.45" fill="#fff"/><path d="M7.4 6.8h2.3v1c.4-.7 1.2-1.2 2.3-1.2 1.9 0 2.5 1.2 2.5 3v4.4h-2.4v-3.9c0-.9-.2-1.5-1-1.5s-1.3.6-1.3 1.5v3.9H7.4z" fill="#fff"/></svg>
<span id="n2" class="t" style="left:242.00px;top:571.36px;font-size:14.1px;color:#3f51b5;font-weight:700;letter-spacing:0.065px;">Jessica Famibelle MERCATO DE L...</span>
<span id="d2_0" class="t" style="left:242.00px;top:591.43px;font-size:12.6px;color:#666666;font-weight:400;letter-spacing:0.346px;">Recruteur indépendant spécialiste</span>
<span id="d2_1" class="t" style="left:242.00px;top:609.13px;font-size:12.6px;color:#666666;font-weight:400;letter-spacing:0.484px;">médico-social</span>
<span id="d2_2" class="t" style="left:344.80px;top:609.13px;font-size:12.6px;color:#666666;font-weight:400;letter-spacing:0.316px;">Créatrice de lien et</span>
<div class="r" style="left:662px;top:578px;width:46.799999999999955px;height:27.700000000000045px;background:#eceff1;border-radius:13.850000000000023px;"></div>
<svg class="r" style="left:662.5px;top:579.85px" width="24" height="24" viewBox="0 0 24 24"><defs><clipPath id="cl591"><circle cx="12" cy="12" r="12"/></clipPath></defs><circle cx="12" cy="12" r="12" fill="#eceff1"/><g clip-path="url(#cl591)"><rect x="10" y="3" width="11.5" height="21" fill="#8c95d6"/><rect x="2" y="15" width="8" height="9" fill="#a9b0e3"/></g></svg>
<span id="c2_0" class="t" style="left:695.20px;top:585.87px;font-size:12.5px;color:#3a3a3a;font-weight:400;letter-spacing:0.450px;">-</span>
<span id="l2" class="t" style="left:1254.70px;top:589.06px;font-size:13.4px;color:#333;font-weight:400;letter-spacing:-0.145px;">33210 Langon, France</span>
<span id="li2" class="t" style="left:1476.80px;top:585.62px;font-size:16.4px;color:#283593;font-weight:700;letter-spacing:-1.287px;">Linked</span>
<div class="r" style="left:1525px;top:585.9px;width:16px;height:15.399999999999977px;background:#283593;border-radius:2px;"></div>
<svg class="r" style="left:1525px;top:585.9px" width="16" height="15.4" viewBox="0 0 16 15.4"><rect x="2.2" y="5.6" width="2.6" height="7.8" fill="#fff"/><circle cx="3.5" cy="3.2" r="1.5" fill="#fff"/><path d="M6.6 5.6h2.5v1.1c.45-.75 1.3-1.3 2.5-1.3 2 0 2.7 1.3 2.7 3.2v4.8h-2.6V9.2c0-1-.25-1.6-1.1-1.6s-1.4.65-1.4 1.6v4.2H6.6z" fill="#fff"/></svg>
<span id="dt2" class="t" style="left:1618.70px;top:581.06px;font-size:12.8px;color:#222;font-weight:700;letter-spacing:-0.183px;">Email envoyé</span>
<span id="dd2" class="t" style="left:1618.70px;top:598.76px;font-size:12.8px;color:#333;font-weight:400;letter-spacing:0.128px;">il y a 6 mois</span>
<svg class="r" style="left:120.3px;top:654.13px;" width="21.33" height="21.33" viewBox="0 0 24 24"><path fill="#3f51b5" d="M19 3H5c-1.11 0-2 .9-2 2v14c0 1.1.89 2 2 2h14c1.11 0 2-.9 2-2V5c0-1.1-.89-2-2-2zm-9 14l-5-5 1.41-1.41L10 14.17l7.59-7.59L19 8l-9 9z"/></svg>
<svg class="r" style="left:169px;top:640.3px" width="48" height="48" viewBox="0 0 48 48"><defs><clipPath id="c4"><circle cx="24" cy="24" r="24"/></clipPath><filter id="bl4" x="-10%" y="-10%" width="120%" height="120%"><feGaussianBlur stdDeviation="0.9"/></filter></defs><g clip-path="url(#c4)"><g filter="url(#bl4)"><rect width="48" height="48" fill="#2d6fc6"/><text x="-1" y="17" font-size="18" font-weight="700" fill="#e8f1fb" font-family="Liberation Sans">atch</text><ellipse cx="24" cy="21" rx="6.5" ry="8" fill="#c8a088"/><path d="M17 17 Q24 9 31 17 L31 14 Q24 8 17 14z" fill="#2b2b2b"/><path d="M6 48 Q8 30 24 29 Q40 30 42 48z" fill="#efefef"/></g></g></svg>
<div class="r" style="left:204px;top:673.8px;width:17px;height:17px;border-radius:2.5px;background:#2d79b8;border:1px solid #fff;box-sizing:border-box"></div>
<svg class="r" style="left:204px;top:673.8px" width="17" height="17" viewBox="0 0 17 17"><rect x="3.2" y="6.8" width="2.4" height="7.2" fill="#fff"/><circle cx="4.4" cy="4.4" r="1.45" fill="#fff"/><path d="M7.4 6.8h2.3v1c.4-.7 1.2-1.2 2.3-1.2 1.9 0 2.5 1.2 2.5 3v4.4h-2.4v-3.9c0-.9-.2-1.5-1-1.5s-1.3.6-1.3 1.5v3.9H7.4z" fill="#fff"/></svg>
<span id="n3" class="t" style="left:242.00px;top:649.56px;font-size:14.1px;color:#3f51b5;font-weight:700;letter-spacing:0.084px;">Baptiste CAVALIÈRE</span>
<span id="d3_0" class="t" style="left:242.00px;top:669.83px;font-size:12.6px;color:#666666;font-weight:400;letter-spacing:0.280px;">Recruteur Tech &amp; Digital</span>
<div class="r" style="left:662px;top:647.3px;width:93.39999999999998px;height:27.200000000000045px;background:#eceff1;border-radius:13.600000000000023px;"></div>
<svg class="r" style="left:662.5px;top:648.9px" width="24" height="24" viewBox="0 0 24 24"><defs></defs><circle cx="12" cy="12" r="12" fill="#0d1446"/><rect x="5" y="10.5" width="11" height="2.5" fill="#cfd6f5"/><rect x="16" y="10" width="3" height="3" fill="#3fa6e8"/></svg>
<span id="c3_0" class="t" style="left:695.20px;top:654.92px;font-size:12.5px;color:#3a3a3a;font-weight:400;letter-spacing:0.428px;">KatchMe</span>
<span id="l3" class="t" style="left:1254.70px;top:657.66px;font-size:13.4px;color:#333;font-weight:400;letter-spacing:-0.203px;">Bordeaux, France</span>
<span id="li3" class="t" style="left:1476.80px;top:654.42px;font-size:16.4px;color:#283593;font-weight:700;letter-spacing:-1.287px;">Linked</span>
<div class="r" style="left:1525px;top:654.6999999999999px;width:16px;height:15.399999999999977px;background:#283593;border-radius:2px;"></div>
<svg class="r" style="left:1525px;top:654.6999999999999px" width="16" height="15.4" viewBox="0 0 16 15.4"><rect x="2.2" y="5.6" width="2.6" height="7.8" fill="#fff"/><circle cx="3.5" cy="3.2" r="1.5" fill="#fff"/><path d="M6.6 5.6h2.5v1.1c.45-.75 1.3-1.3 2.5-1.3 2 0 2.7 1.3 2.7 3.2v4.8h-2.6V9.2c0-1-.25-1.6-1.1-1.6s-1.4.65-1.4 1.6v4.2H6.6z" fill="#fff"/></svg>
<span id="dt3" class="t" style="left:1618.70px;top:649.86px;font-size:12.8px;color:#222;font-weight:700;letter-spacing:0.079px;">Connexion acceptée</span>
<span id="dd3" class="t" style="left:1618.70px;top:667.56px;font-size:12.8px;color:#333;font-weight:400;letter-spacing:0.128px;">il y a 8 mois</span>
<svg class="r" style="left:120.3px;top:720.83px;" width="21.33" height="21.33" viewBox="0 0 24 24"><path fill="#3f51b5" d="M19 3H5c-1.11 0-2 .9-2 2v14c0 1.1.89 2 2 2h14c1.11 0 2-.9 2-2V5c0-1.1-.89-2-2-2zm-9 14l-5-5 1.41-1.41L10 14.17l7.59-7.59L19 8l-9 9z"/></svg>
<svg class="r" style="left:169px;top:707.0px" width="48" height="48" viewBox="0 0 48 48"><defs><clipPath id="c5"><circle cx="24" cy="24" r="24"/></clipPath><filter id="bl5" x="-10%" y="-10%" width="120%" height="120%"><feGaussianBlur stdDeviation="0.9"/></filter></defs><g clip-path="url(#c5)"><g filter="url(#bl5)"><rect width="48" height="48" fill="#5b7a42"/><rect y="0" width="48" height="18" fill="#9aa37a"/><rect x="34" y="10" width="14" height="25" fill="#7a6a4a"/><ellipse cx="23" cy="22" rx="9" ry="11" fill="#c99272"/><path d="M13 17 Q23 5 33 17 L33 13 Q23 4 13 13z" fill="#8a8a86"/><path d="M3 48 Q6 33 23 34 Q40 33 44 48z" fill="#26304a"/><path d="M19 34 L23 45 L27 34z" fill="#a8bede"/></g></g></svg>
<div class="r" style="left:204px;top:740.5px;width:17px;height:17px;border-radius:2.5px;background:#2d79b8;border:1px solid #fff;box-sizing:border-box"></div>
<svg class="r" style="left:204px;top:740.5px" width="17" height="17" viewBox="0 0 17 17"><rect x="3.2" y="6.8" width="2.4" height="7.2" fill="#fff"/><circle cx="4.4" cy="4.4" r="1.45" fill="#fff"/><path d="M7.4 6.8h2.3v1c.4-.7 1.2-1.2 2.3-1.2 1.9 0 2.5 1.2 2.5 3v4.4h-2.4v-3.9c0-.9-.2-1.5-1-1.5s-1.3.6-1.3 1.5v3.9H7.4z" fill="#fff"/></svg>
<span id="n4" class="t" style="left:242.00px;top:716.26px;font-size:14.1px;color:#3f51b5;font-weight:700;letter-spacing:0.298px;">Mikael TOSSIN</span>
<span id="d4_0" class="t" style="left:242.00px;top:736.53px;font-size:12.6px;color:#666666;font-weight:400;letter-spacing:0.333px;">Recruteur indépendant</span>
<div class="r" style="left:662px;top:706.2px;width:150px;height:43.0px;background:#eceff1;border-radius:21.5px;"></div>
<svg class="r" style="left:662.5px;top:715.7px" width="24" height="24" viewBox="0 0 24 24"><defs></defs><circle cx="12" cy="12" r="12" fill="#211c52"/><path d="M7.5 12.5 V7 Q9 4.8 10.6 7 V12.5z" fill="#3d86f2"/><path d="M10.8 12.5 V5.5 Q12.8 3.5 14.8 6 L16 12.5z" fill="#f2582a"/><rect x="3.6" y="14" width="16.8" height="2.6" fill="#f4f4f8"/><rect x="6" y="17.6" width="12" height="0.9" fill="#9a98b8"/></svg>
<span id="c4_0" class="t" style="left:695.20px;top:713.72px;font-size:12.5px;color:#3a3a3a;font-weight:400;letter-spacing:0.440px;">Le Mercato de</span>
<span id="c4_1" class="t" style="left:695.20px;top:729.72px;font-size:12.5px;color:#3a3a3a;font-weight:400;letter-spacing:0.450px;">l'Emploi</span>
<span id="l4" class="t" style="left:1254.70px;top:724.36px;font-size:13.4px;color:#333;font-weight:400;letter-spacing:-0.111px;">56100 Lorient, France</span>
<span id="li4" class="t" style="left:1476.80px;top:721.12px;font-size:16.4px;color:#283593;font-weight:700;letter-spacing:-1.287px;">Linked</span>
<div class="r" style="left:1525px;top:721.4px;width:16px;height:15.399999999999977px;background:#283593;border-radius:2px;"></div>
<svg class="r" style="left:1525px;top:721.4px" width="16" height="15.4" viewBox="0 0 16 15.4"><rect x="2.2" y="5.6" width="2.6" height="7.8" fill="#fff"/><circle cx="3.5" cy="3.2" r="1.5" fill="#fff"/><path d="M6.6 5.6h2.5v1.1c.45-.75 1.3-1.3 2.5-1.3 2 0 2.7 1.3 2.7 3.2v4.8h-2.6V9.2c0-1-.25-1.6-1.1-1.6s-1.4.65-1.4 1.6v4.2H6.6z" fill="#fff"/></svg>
<span id="dt4" class="t" style="left:1618.70px;top:716.56px;font-size:12.8px;color:#222;font-weight:700;letter-spacing:0.079px;">Connexion acceptée</span>
<span id="dd4" class="t" style="left:1618.70px;top:734.26px;font-size:12.8px;color:#333;font-weight:400;letter-spacing:0.128px;">il y a 8 mois</span>
<svg class="r" style="left:120.3px;top:788.0300000000001px;" width="21.33" height="21.33" viewBox="0 0 24 24"><path fill="#3f51b5" d="M19 3H5c-1.11 0-2 .9-2 2v14c0 1.1.89 2 2 2h14c1.11 0 2-.9 2-2V5c0-1.1-.89-2-2-2zm-9 14l-5-5 1.41-1.41L10 14.17l7.59-7.59L19 8l-9 9z"/></svg>
<svg class="r" style="left:169px;top:774.2px" width="48" height="48" viewBox="0 0 48 48"><defs><clipPath id="c6"><circle cx="24" cy="24" r="24"/></clipPath><filter id="bl6" x="-10%" y="-10%" width="120%" height="120%"><feGaussianBlur stdDeviation="0.9"/></filter></defs><g clip-path="url(#c6)"><g filter="url(#bl6)"><rect width="48" height="48" fill="#34487a"/><path d="M13 36 C10 16 17 8 25 8 C34 9 38 17 36 36z" fill="#120e0c"/><ellipse cx="25" cy="20" rx="7" ry="8.5" fill="#dcb49c"/><path d="M6 48 Q9 30 25 31 Q41 30 44 48z" fill="#121212"/><ellipse cx="36" cy="40" rx="5" ry="2.5" fill="#d8b098"/></g></g></svg>
<div class="r" style="left:204px;top:807.7px;width:17px;height:17px;border-radius:2.5px;background:#2d79b8;border:1px solid #fff;box-sizing:border-box"></div>
<svg class="r" style="left:204px;top:807.7px" width="17" height="17" viewBox="0 0 17 17"><rect x="3.2" y="6.8" width="2.4" height="7.2" fill="#fff"/><circle cx="4.4" cy="4.4" r="1.45" fill="#fff"/><path d="M7.4 6.8h2.3v1c.4-.7 1.2-1.2 2.3-1.2 1.9 0 2.5 1.2 2.5 3v4.4h-2.4v-3.9c0-.9-.2-1.5-1-1.5s-1.3.6-1.3 1.5v3.9H7.4z" fill="#fff"/></svg>
<span id="n5" class="t" style="left:242.00px;top:783.26px;font-size:14.1px;color:#3f51b5;font-weight:700;letter-spacing:0.358px;">Vanessa CHAMBAUD</span>
<span id="d5_0" class="t" style="left:242.00px;top:803.63px;font-size:12.6px;color:#666666;font-weight:400;letter-spacing:0.300px;">Chargée de recrutement IT</span>
<div class="r" style="left:662px;top:781.2px;width:95.60000000000002px;height:27.59999999999991px;background:#eceff1;border-radius:13.799999999999955px;"></div>
<svg class="r" style="left:662.5px;top:783.0px" width="24" height="24" viewBox="0 0 24 24"><defs></defs><circle cx="12" cy="12" r="12" fill="#151515"/><circle cx="11" cy="11.5" r="6.5" fill="#fff"/><circle cx="11" cy="11.5" r="3" fill="#151515"/><circle cx="19" cy="18" r="2.6" fill="#2b9af3"/></svg>
<span id="c5_0" class="t" style="left:695.20px;top:789.02px;font-size:12.5px;color:#3a3a3a;font-weight:400;letter-spacing:0.436px;">Onepoint</span>
<span id="l5" class="t" style="left:1254.70px;top:791.56px;font-size:13.4px;color:#333;font-weight:400;letter-spacing:-0.203px;">Bordeaux, France</span>
<span id="li5" class="t" style="left:1476.80px;top:788.32px;font-size:16.4px;color:#283593;font-weight:700;letter-spacing:-1.287px;">Linked</span>
<div class="r" style="left:1525px;top:788.6px;width:16px;height:15.399999999999977px;background:#283593;border-radius:2px;"></div>
<svg class="r" style="left:1525px;top:788.6px" width="16" height="15.4" viewBox="0 0 16 15.4"><rect x="2.2" y="5.6" width="2.6" height="7.8" fill="#fff"/><circle cx="3.5" cy="3.2" r="1.5" fill="#fff"/><path d="M6.6 5.6h2.5v1.1c.45-.75 1.3-1.3 2.5-1.3 2 0 2.7 1.3 2.7 3.2v4.8h-2.6V9.2c0-1-.25-1.6-1.1-1.6s-1.4.65-1.4 1.6v4.2H6.6z" fill="#fff"/></svg>
<span id="dt5" class="t" style="left:1618.70px;top:783.76px;font-size:12.8px;color:#222;font-weight:700;letter-spacing:-0.023px;">Demande de connexion envoyée</span>
<span id="dd5" class="t" style="left:1618.70px;top:801.46px;font-size:12.8px;color:#333;font-weight:400;letter-spacing:0.128px;">il y a 8 mois</span>
<svg class="r" style="left:120.3px;top:862.33px;" width="21.33" height="21.33" viewBox="0 0 24 24"><path fill="#3f51b5" d="M19 3H5c-1.11 0-2 .9-2 2v14c0 1.1.89 2 2 2h14c1.11 0 2-.9 2-2V5c0-1.1-.89-2-2-2zm-9 14l-5-5 1.41-1.41L10 14.17l7.59-7.59L19 8l-9 9z"/></svg>
<svg class="r" style="left:169px;top:848.5px" width="48" height="48" viewBox="0 0 48 48"><defs><clipPath id="c7"><circle cx="24" cy="24" r="24"/></clipPath><filter id="bl7" x="-10%" y="-10%" width="120%" height="120%"><feGaussianBlur stdDeviation="0.9"/></filter></defs><g clip-path="url(#c7)"><g filter="url(#bl7)"><rect width="48" height="48" fill="#2a221e"/><rect x="28" y="0" width="20" height="28" fill="#8a7258"/><rect x="0" y="0" width="12" height="20" fill="#4a3a2a"/><path d="M11 40 C8 18 15 8 24 8 C34 9 39 18 36 40z" fill="#6e3a22"/><ellipse cx="24" cy="22" rx="7.5" ry="9.5" fill="#e6bca6"/><path d="M4 48 Q8 33 24 34 Q40 33 44 48z" fill="#1a2232"/></g></g></svg>
<div class="r" style="left:204px;top:882.0px;width:17px;height:17px;border-radius:2.5px;background:#2d79b8;border:1px solid #fff;box-sizing:border-box"></div>
<svg class="r" style="left:204px;top:882.0px" width="17" height="17" viewBox="0 0 17 17"><rect x="3.2" y="6.8" width="2.4" height="7.2" fill="#fff"/><circle cx="4.4" cy="4.4" r="1.45" fill="#fff"/><path d="M7.4 6.8h2.3v1c.4-.7 1.2-1.2 2.3-1.2 1.9 0 2.5 1.2 2.5 3v4.4h-2.4v-3.9c0-.9-.2-1.5-1-1.5s-1.3.6-1.3 1.5v3.9H7.4z" fill="#fff"/></svg>
<span id="n6" class="t" style="left:242.00px;top:848.36px;font-size:14.1px;color:#3f51b5;font-weight:700;letter-spacing:0.398px;">Mathilde HAUTOY</span>
<span id="d6_0" class="t" style="left:242.00px;top:867.53px;font-size:12.6px;color:#666666;font-weight:400;letter-spacing:0.260px;">Recrutement | Executive Search |</span>
<span id="d6_1" class="t" style="left:242.00px;top:885.53px;font-size:12.6px;color:#666666;font-weight:400;letter-spacing:0.338px;">Talent Acquisition | Recruiter | Head</span>
<div class="r" style="left:662px;top:839.2px;width:150px;height:59.0px;background:#eceff1;border-radius:29.5px;"></div>
<svg class="r" style="left:662.5px;top:856.7px" width="24" height="24" viewBox="0 0 24 24"><defs></defs><circle cx="12" cy="12" r="12" fill="#23292e"/><path d="M3.5 5.5 Q12 9.5 20.5 4.5 L19 8 Q12 12 5 8z" fill="#eef0f2"/><rect x="3.5" y="11" width="17" height="1.3" fill="#8a9096"/><rect x="3" y="13.5" width="18" height="3" fill="#dfe3e6"/></svg>
<span id="c6_0" class="t" style="left:695.20px;top:846.72px;font-size:12.5px;color:#3a3a3a;font-weight:400;letter-spacing:0.450px;">VIDAL</span>
<span id="c6_1" class="t" style="left:695.20px;top:862.72px;font-size:12.5px;color:#3a3a3a;font-weight:400;letter-spacing:0.450px;">ASSOCIATES</span>
<span id="c6_2" class="t" style="left:695.20px;top:878.72px;font-size:12.5px;color:#3a3a3a;font-weight:400;letter-spacing:0.450px;">Consulti...</span>
<span id="l6" class="t" style="left:1254.70px;top:865.86px;font-size:13.4px;color:#333;font-weight:400;letter-spacing:-0.203px;">Bordeaux, France</span>
<span id="li6" class="t" style="left:1476.80px;top:862.62px;font-size:16.4px;color:#283593;font-weight:700;letter-spacing:-1.287px;">Linked</span>
<div class="r" style="left:1525px;top:862.9px;width:16px;height:15.399999999999977px;background:#283593;border-radius:2px;"></div>
<svg class="r" style="left:1525px;top:862.9px" width="16" height="15.4" viewBox="0 0 16 15.4"><rect x="2.2" y="5.6" width="2.6" height="7.8" fill="#fff"/><circle cx="3.5" cy="3.2" r="1.5" fill="#fff"/><path d="M6.6 5.6h2.5v1.1c.45-.75 1.3-1.3 2.5-1.3 2 0 2.7 1.3 2.7 3.2v4.8h-2.6V9.2c0-1-.25-1.6-1.1-1.6s-1.4.65-1.4 1.6v4.2H6.6z" fill="#fff"/></svg>
<span id="dt6" class="t" style="left:1618.70px;top:858.06px;font-size:12.8px;color:#222;font-weight:700;letter-spacing:0.079px;">Connexion acceptée</span>
<span id="dd6" class="t" style="left:1618.70px;top:875.76px;font-size:12.8px;color:#333;font-weight:400;letter-spacing:0.128px;">il y a 8 mois</span>
<div class="r" style="left:979px;top:854px;width:99px;height:32px;background:#9575cd;border-radius:16px;"></div>
<span id="ct" class="t" style="left:991.60px;top:862.30px;font-size:13px;color:#f3ecff;font-weight:400;letter-spacing:0.250px;">Contacté</span>
<svg class="r" style="left:1050px;top:858px;" width="24" height="24" viewBox="0 0 24 24"><path fill="#f3ecff" d="M7 10l5 5 5-5z"/></svg>
<span id="p2" class="t" style="left:1095.40px;top:866.40px;font-size:13px;color:#3f51b5;font-weight:700;letter-spacing:1.566px;">+2</span>
<span id="rb" class="t" style="left:991.60px;top:887.37px;font-size:11.5px;color:#555;font-weight:400;letter-spacing:-0.174px;">Recruteurs Bor...</span>
<div class="r" style="left:1167.7px;top:848.3px;width:32px;height:32px;border-radius:50%;background:#eceff1"></div>
<svg class="r" style="left:1175px;top:856.5px" width="16" height="16" viewBox="0 0 16 16"><rect width="16" height="16" rx="2" fill="#607d8b"/><rect x="2.4" y="6" width="2.6" height="8" fill="#e8eef0"/><circle cx="3.7" cy="3.4" r="1.5" fill="#e8eef0"/><path d="M6.8 6h2.5v1.1c.45-.75 1.3-1.3 2.5-1.3 2 0 2.7 1.3 2.7 3.2V14h-2.6V9.6c0-1-.25-1.6-1.1-1.6s-1.4.65-1.4 1.6V14H6.8z" fill="#e8eef0"/></svg>
<div class="r" style="left:1167.7px;top:436.0px;width:32px;height:32px;border-radius:50%;background:#e6e9eb"></div>
<div class="r" style="left:1167.7px;top:504.5px;width:32px;height:32px;border-radius:50%;background:#e6e9eb"></div>
<div class="r" style="left:1167.7px;top:573.5px;width:32px;height:32px;border-radius:50%;background:#e6e9eb"></div>
<div class="r" style="left:1167.7px;top:642.3px;width:32px;height:32px;border-radius:50%;background:#e6e9eb"></div>
<div class="r" style="left:1167.7px;top:709.0px;width:32px;height:32px;border-radius:50%;background:#e6e9eb"></div>
<div class="r" style="left:1167.7px;top:776.2px;width:32px;height:32px;border-radius:50%;background:#e6e9eb"></div>
<svg class="r" style="left:389.8px;top:451.5px" width="16" height="16" viewBox="0 0 16 16"><path d="M3.6 8.2 V12 Q8 15.6 12.4 12 V8.2 L8 10.2z" fill="#5a5a5a"/><path d="M0.4 6 L8 2 L15.6 6 L8 10z" fill="#6e6e6e"/><path d="M8 6 L3 8.6 V14.6" stroke="#d8b07a" stroke-width="1.4" fill="none"/></svg>
<svg class="r" style="left:327.5px;top:606.5px" width="17" height="16" viewBox="0 0 17 16"><path d="M1.5 14.5 L4 10.5 L6.5 13z" fill="#f0e070"/><path d="M3 8.5 L6 6.5 L7 9z" fill="#e0586a"/><path d="M8 13.5 L10 10.5 L7.5 9.5z" fill="#e0586a"/><path d="M5 11.5 Q9 3 16 1 Q14.5 8 6.5 12.8z" fill="#b9cbe6" stroke="#888" stroke-width="0.8"/><circle cx="11.2" cy="5.4" r="1.6" fill="#6a5858"/></svg>
<svg class="r" style="left:404.5px;top:802.5px" width="15" height="14" viewBox="0 0 15 14"><path d="M1.5 1 L5.5 3 L9.5 3 L13.5 1 L14 5 L14 9.5 L11.5 10.5 L12.5 13.5 L10.5 13.5 L8.5 11 L6.5 11 L4.5 13.5 L2.5 13.5 L3.5 10.5 L1 9.5 L1 5z" fill="#7a7a7a"/><path d="M4 4.5 Q7.5 3 11 4.5 L11.2 9.2 L7.5 11 L3.8 9.2z" fill="#b7b0d8"/><circle cx="5.8" cy="6.8" r="1" fill="#7a70a8"/><circle cx="9.2" cy="6.8" r="1" fill="#7a70a8"/></svg>
<div class="r" style="left:972px;top:379px;width:223px;height:483.5px;background:#fff;border-radius:4px;box-shadow:0px 5px 5px -3px rgba(0,0,0,0.2),0px 8px 10px 1px rgba(0,0,0,0.14),0px 3px 14px 2px rgba(0,0,0,0.12)"></div>
<span id="g1" class="t" style="left:988.60px;top:403.71px;font-size:13.1px;color:#666;font-weight:400;letter-spacing:0.044px;">En sourcing</span>
<span id="g2" class="t" style="left:988.60px;top:487.81px;font-size:13.1px;color:#666;font-weight:400;letter-spacing:-0.012px;">En process</span>
<span id="g3" class="t" style="left:988.60px;top:643.91px;font-size:13.1px;color:#666;font-weight:400;letter-spacing:0.388px;">Archivé</span>
<div class="r" style="left:988px;top:441.2px;width:151px;height:24.0px;background:#d1c4e9;border-radius:12px;"></div>
<span id="s1" class="t" style="left:996.40px;top:446.61px;font-size:11.8px;color:#1c1c1c;font-weight:400;letter-spacing:0.863px;">Détection automatique</span>
<div class="r" style="left:988px;top:525.3px;width:112px;height:24.0px;background:#64b5f6;border-radius:12px;"></div>
<span id="s2" class="t" style="left:996.40px;top:530.71px;font-size:11.8px;color:#0b1a2a;font-weight:400;letter-spacing:0.585px;">Pré qual (15min)</span>
<div class="r" style="left:988px;top:561.2px;width:100px;height:24.0px;background:#3d9a88;border-radius:12px;"></div>
<span id="s3" class="t" style="left:996.40px;top:566.61px;font-size:11.8px;color:#ffffff;font-weight:400;letter-spacing:0.867px;">Offre envoyée</span>
<div class="r" style="left:988px;top:597.2px;width:62px;height:24.0px;background:#5ee0b3;border-radius:12px;"></div>
<span id="s4" class="t" style="left:996.40px;top:602.61px;font-size:11.8px;color:#0b1a14;font-weight:400;letter-spacing:0.663px;">Recruté</span>
<div class="r" style="left:988px;top:681px;width:54px;height:24px;background:#263238;border-radius:12px;"></div>
<span id="s5" class="t" style="left:996.40px;top:686.41px;font-size:11.8px;color:#ffffff;font-weight:400;letter-spacing:0.737px;">Rejeté</span>
<div class="r" style="left:988px;top:717px;width:142.70000000000005px;height:24px;background:#c8e6c9;border-radius:12px;"></div>
<span id="s6" class="t" style="left:996.40px;top:722.41px;font-size:11.8px;color:#1c1c1c;font-weight:400;letter-spacing:0.742px;">Manque d'expérience</span>
<div class="r" style="left:988px;top:753px;width:168.5999999999999px;height:24px;background:#43a047;border-radius:12px;"></div>
<span id="s7" class="t" style="left:996.40px;top:758.41px;font-size:11.8px;color:#0d1a0d;font-weight:400;letter-spacing:0.637px;">Churn, changement d'ATS</span>
<div class="r" style="left:988px;top:789px;width:182.70000000000005px;height:24px;background:#81c784;border-radius:12px;"></div>
<span id="s8" class="t" style="left:996.40px;top:794.41px;font-size:11.8px;color:#0d1a0d;font-weight:400;letter-spacing:0.741px;">Churn, démission entreprise</span>
<div class="r" style="left:988px;top:825px;width:92.79999999999995px;height:24px;background:#f4511e;border-radius:12px;"></div>
<span id="s9" class="t" style="left:996.40px;top:830.41px;font-size:11.8px;color:#ffffff;font-weight:400;letter-spacing:0.781px;">Usage arrêté</span>
</body></html>
